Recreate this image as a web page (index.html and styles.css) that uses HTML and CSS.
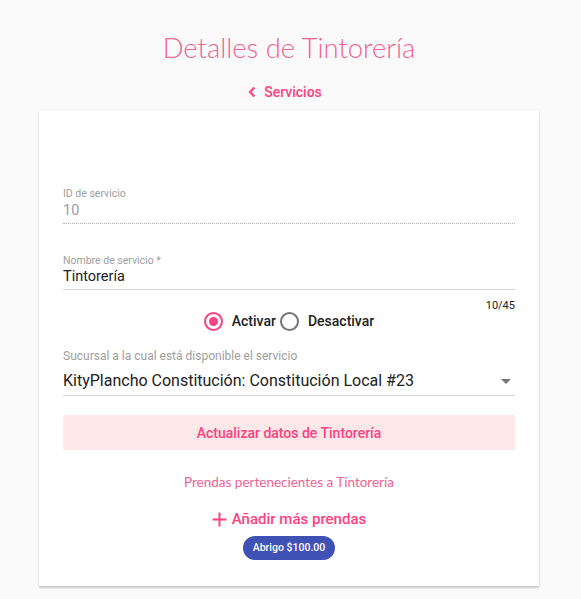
FILE: index.html
```html
<!DOCTYPE html>
<html lang="es">
<head>
<meta charset="utf-8">
<title>Detalles de Tintorería</title>
<link rel="stylesheet" href="styles.css">
</head>
<body>
<div class="page">
  <h1 class="title">Detalles de Tintorería</h1>
  <a class="back" href="#">
    <svg class="chev" width="10" height="12" viewBox="0 0 10 12"><path d="M7.5 1.5 L3 6 L7.5 10.5" fill="none" stroke="#ff4081" stroke-width="2.2"/></svg>
    <span>Servicios</span>
  </a>
  <div class="card">
    <div class="spacer"></div>
    <div class="field disabled">
      <div class="label">ID de servicio</div>
      <div class="value">10</div>
      <div class="line dotted"></div>
    </div>
    <div class="field name">
      <div class="label">Nombre de servicio *</div>
      <div class="value">Tintorería</div>
      <div class="line"></div>
      <div class="counter">10/45</div>
    </div>
    <div class="radios">
      <span class="radio on"><span class="dot"></span></span>
      <span class="rlabel">Activar</span>
      <span class="radio"></span>
      <span class="rlabel">Desactivar</span>
    </div>
    <div class="field select">
      <div class="label">Sucursal a la cual está disponible el servicio</div>
      <div class="selrow">
        <div class="value">KityPlancho Constitución: Constitución Local #23</div>
        <span class="arrow"></span>
      </div>
      <div class="line"></div>
    </div>
    <button class="update">Actualizar datos de Tintorería</button>
    <div class="prendas">Prendas pertenecientes a Tintorería</div>
    <div class="add">
      <svg width="15" height="15" viewBox="0 0 15 15"><path d="M7.5 0.5 V14.5 M0.5 7.5 H14.5" stroke="#ff4081" stroke-width="2"/></svg>
      <span>Añadir más prendas</span>
    </div>
    <div class="chips"><span class="chip">Abrigo $100.00</span></div>
  </div>
</div>
</body>
</html>
```
FILE: styles.css
```css
html, body { margin: 0; padding: 0; }
body {
  background: #fafafa;
  font-family: Roboto, "Noto Sans", sans-serif;
  width: 581px;
  height: 599px;
  overflow: hidden;
}
.page {
  display: flex;
  flex-direction: column;
  align-items: center;
  padding-right: 3px;
}
.title {
  margin: 30px 0 0 0;
  font-family: Lato, "Open Sans", sans-serif;
  font-weight: 300;
  font-size: 27.4px;
  line-height: 36px;
  color: #f06292;
  letter-spacing: 0;
}
.back {
  margin-top: 17px;
  display: flex;
  align-items: center;
  gap: 7px;
  text-decoration: none;
  color: #ff4081;
  font-weight: 500;
  font-size: 14px;
  line-height: 18px;
  margin-right: 9px;
}
.card {
  margin-top: 9px;
  width: 452px;
  padding: 0 24px 24px 24px;
  background: #fff;
  box-shadow: 0 2px 2px rgba(0,0,0,0.18), 0 0 2px rgba(0,0,0,0.08);
  display: flex;
  flex-direction: column;
  height: 452px;
}
.spacer { height: 77px; }
.field { display: flex; flex-direction: column; }
.label {
  font-size: 10.5px;
  line-height: 13px;
  color: #9e9e9e;
}
.value {
  font-size: 14.5px;
  line-height: 20px;
  color: #212121;
  margin-top: 1px;
}
.disabled .value { color: #9e9e9e; }
.line { height: 1px; background: #d6d6d6; margin-top: 2px; }
.line.dotted {
  background: none;
  border-bottom: 1px dotted #b0b0b0;
  height: 0;
}
.name { margin-top: 30px; }
.name .value { margin-top: 0; }
.counter {
  align-self: flex-end;
  font-size: 11px;
  line-height: 14px;
  color: #212121;
  margin-top: 9px;
}
.radios {
  display: flex;
  align-items: center;
  justify-content: center;
  margin-top: -3px;
  height: 22px;
}
.radio {
  width: 15px;
  height: 15px;
  border: 2px solid #757575;
  border-radius: 50%;
  display: flex;
  align-items: center;
  justify-content: center;
}
.radio.on { border-color: #ff4081; }
.radio .dot { width: 9px; height: 9px; border-radius: 50%; background: #ff4081; }
.rlabel {
  font-weight: 500;
  font-size: 14px;
  color: #212121;
  margin-left: 9px;
  margin-right: 4px;
}
.rlabel:last-child { margin-right: 0; }
.select { margin-top: 16px; }
.select .label { font-size: 12px; line-height: 16px; }
.selrow { display: flex; align-items: center; justify-content: space-between; margin-top: 6px; }
.select .value { font-size: 16px; line-height: 22px; margin-top: 0; }
.arrow {
  width: 0; height: 0;
  border-left: 5px solid transparent;
  border-right: 5px solid transparent;
  border-top: 5px solid #757575;
  margin-right: 4px;
}
.select .line { margin-top: 3px; }
.update {
  margin-top: 19px;
  height: 35px;
  border: 0;
  border-radius: 2px;
  background: #fde8e9;
  color: #ff4081;
  font-family: Roboto, sans-serif;
  font-weight: 500;
  font-size: 14px;
  cursor: pointer;
}
.prendas {
  margin-top: 23px;
  text-align: center;
  font-family: Lato, "Open Sans", sans-serif;
  font-size: 13.5px;
  line-height: 18px;
  color: #f06292;
}
.add {
  margin-top: 18px;
  display: flex;
  align-items: center;
  justify-content: center;
  gap: 5px;
  color: #ff4081;
  font-weight: 500;
  font-size: 15px;
  line-height: 20px;
}
.chips { margin-top: 7px; display: flex; justify-content: center; }
.chip {
  background: #3f51b5;
  color: #fff;
  font-size: 10.5px;
  font-weight: 500;
  padding: 0 10px;
  height: 24px;
  line-height: 24px;
  border-radius: 12px;
}
```
